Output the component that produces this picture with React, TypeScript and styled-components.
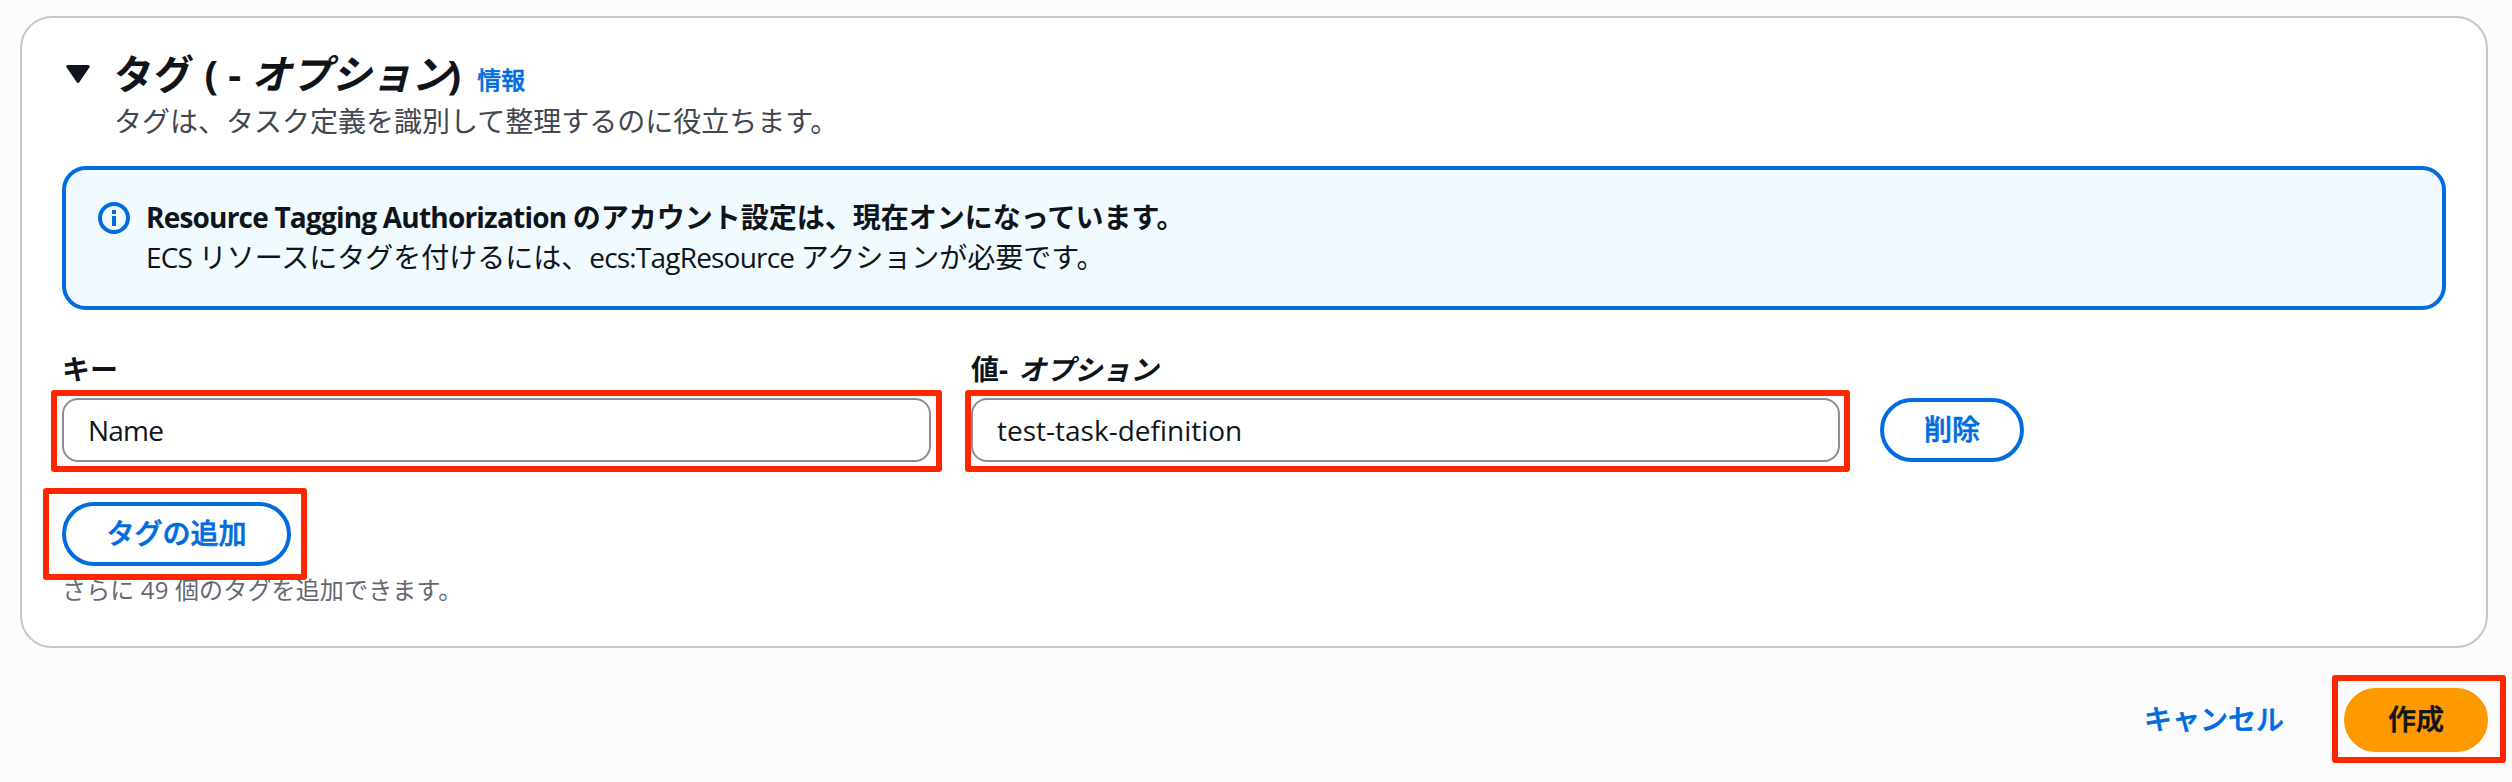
import React from 'react';
import styled, { createGlobalStyle, css } from 'styled-components';

const BLUE = '#006ce0';
const INK = '#0f141a';

const GlobalStyle = createGlobalStyle`
  * { box-sizing: border-box; }
  body {
    margin: 0;
    background: #fcfcff;
    color: ${INK};
    font-family: 'Open Sans', 'Noto Sans CJK JP', sans-serif;
    font-size: 28px;
    line-height: 40px;
  }
`;

const Page = styled.div`
  height: 782px;
  padding: 16px 24px 0 20px;
`;

const Panel = styled.section`
  height: 632px;
  padding: 30px 40px 0;
  background: #fff;
  border: 2px solid #c6c6cd;
  border-radius: 32px;
`;

const Header = styled.header`
  display: flex;
  height: 118px;
`;

const Caret = styled.svg`
  flex: none;
  width: 28px;
  height: 24px;
  margin: 14px 22px 0 2px;
`;

const HeadingText = styled.div`
  white-space: nowrap;
`;

const TitleRow = styled.div`
  display: flex;
  align-items: baseline;
  height: 53px;
`;

const Title = styled.h2`
  margin: 0;
  font-size: 40px;
  line-height: 52px;
  font-weight: 700;

  i {
    margin-right: -4px;
  }
`;

const InfoLink = styled.a`
  margin-left: 16px;
  color: ${BLUE};
  font-size: 24px;
  font-weight: 500;
  -webkit-text-stroke: 0.5px currentColor;
`;

const Description = styled.p`
  margin: 0;
  color: #424650;
`;

const Alert = styled.div`
  display: flex;
  height: 144px;
  padding: 27px 32px;
  background: #f0faff;
  border: 4px solid ${BLUE};
  border-radius: 24px;
`;

const InfoIcon = styled.svg`
  flex: none;
  width: 32px;
  height: 32px;
  margin: 5px 16px 0 0;
`;

const AlertText = styled.div`
  white-space: nowrap;
`;

const AlertTitle = styled.div`
  font-weight: 700;
`;

const Latin = styled.span`
  letter-spacing: -0.8px;
`;

const Fields = styled.div`
  display: flex;
  align-items: flex-end;
  gap: 40px;
  height: 152px;
`;

const Field = styled.label`
  display: block;
  width: 869px;
`;

const Label = styled.div`
  margin-bottom: 9px;
  font-weight: 700;

  i {
    margin-left: 3px;
  }
`;

const Highlight = styled.div<{ $area: string }>`
  position: relative;
  &::after {
    content: '';
    position: absolute;
    inset: ${(p) => p.$area};
    border: 6px solid #ff2600;
    border-radius: 3px;
    pointer-events: none;
  }
`;

const TextInput = styled.input<{ $tight?: boolean }>`
  display: block;
  width: 100%;
  height: 64px;
  padding: 0 24px;
  color: ${INK};
  background: #fff;
  border: 2px solid #8c8c94;
  border-radius: 16px;
  font: inherit;
  letter-spacing: ${(p) => (p.$tight ? '-0.8px' : 'normal')};
`;

const Button = styled.button<{ $kind: 'normal' | 'link' | 'primary'; $width: number }>`
  display: block;
  width: ${(p) => p.$width}px;
  height: 64px;
  padding: 0 0 2px;
  border: 4px solid transparent;
  border-radius: 32px;
  background: transparent;
  color: ${BLUE};
  font: inherit;
  font-weight: 500;
  -webkit-text-stroke: 0.6px currentColor;
  white-space: nowrap;
  ${(p) => p.$kind === 'normal' && css`border-color: ${BLUE}; background: #fff;`}
  ${(p) => p.$kind === 'primary' && css`border-color: #ff9900; background: #ff9900; color: ${INK};`}
`;

const AddArea = styled.div`
  width: 229px;
  margin-top: 40px;
`;

const Hint = styled.div`
  margin-top: 8px;
  color: #656871;
  font-size: 24px;
  line-height: 32px;
  letter-spacing: 0.15px;
`;

const Footer = styled.footer`
  display: flex;
  justify-content: flex-end;
  gap: 16px;
  margin-top: 40px;
`;

export default function App() {
  return (
    <>
      <GlobalStyle />
      <Page>
        <Panel>
          <Header>
            <Caret viewBox="0 0 28 24">
              <path d="M3.7 4.5h20.6L14 19.3z" fill={INK} stroke={INK} strokeWidth="3" strokeLinejoin="round" />
            </Caret>
            <HeadingText>
              <TitleRow>
                <Title>タグ ( - <i>オプション</i>)</Title>
                <InfoLink>情報</InfoLink>
              </TitleRow>
              <Description>タグは、タスク定義を識別して整理するのに役立ちます。</Description>
            </HeadingText>
          </Header>
          <Alert>
            <InfoIcon viewBox="0 0 32 32" fill="none" stroke={BLUE} strokeWidth="4">
              <circle cx="16" cy="16" r="14" />
              <path d="M16 14v10M16 8v4" />
            </InfoIcon>
            <AlertText>
              <AlertTitle><Latin>Resource Tagging Authorization </Latin>のアカウント設定は、現在オンになっています。</AlertTitle>
              <div><Latin>ECS </Latin>リソースにタグを付けるには、<Latin>ecs:TagResource </Latin>アクションが必要です。</div>
            </AlertText>
          </Alert>
          <Fields>
            <Field>
              <Label>キー</Label>
              <Highlight $area="-8px -11px -10px -11px">
                <TextInput $tight defaultValue="Name" />
              </Highlight>
            </Field>
            <Field>
              <Label>値- <i>オプション</i></Label>
              <Highlight $area="-8px -10px -10px -6px">
                <TextInput defaultValue="test-task-definition" />
              </Highlight>
            </Field>
            <Button $kind="normal" $width={144}>削除</Button>
          </Fields>
          <AddArea>
            <Highlight $area="-14px -16px -14px -19px">
              <Button $kind="normal" $width={229}>タグの追加</Button>
            </Highlight>
          </AddArea>
          <Hint>さらに 49 個のタグを追加できます。</Hint>
        </Panel>
        <Footer>
          <Button $kind="link" $width={228}>キャンセル</Button>
          <Highlight $area="-13px -18px -11px -12px">
            <Button $kind="primary" $width={144}>作成</Button>
          </Highlight>
        </Footer>
      </Page>
    </>
  );
}
